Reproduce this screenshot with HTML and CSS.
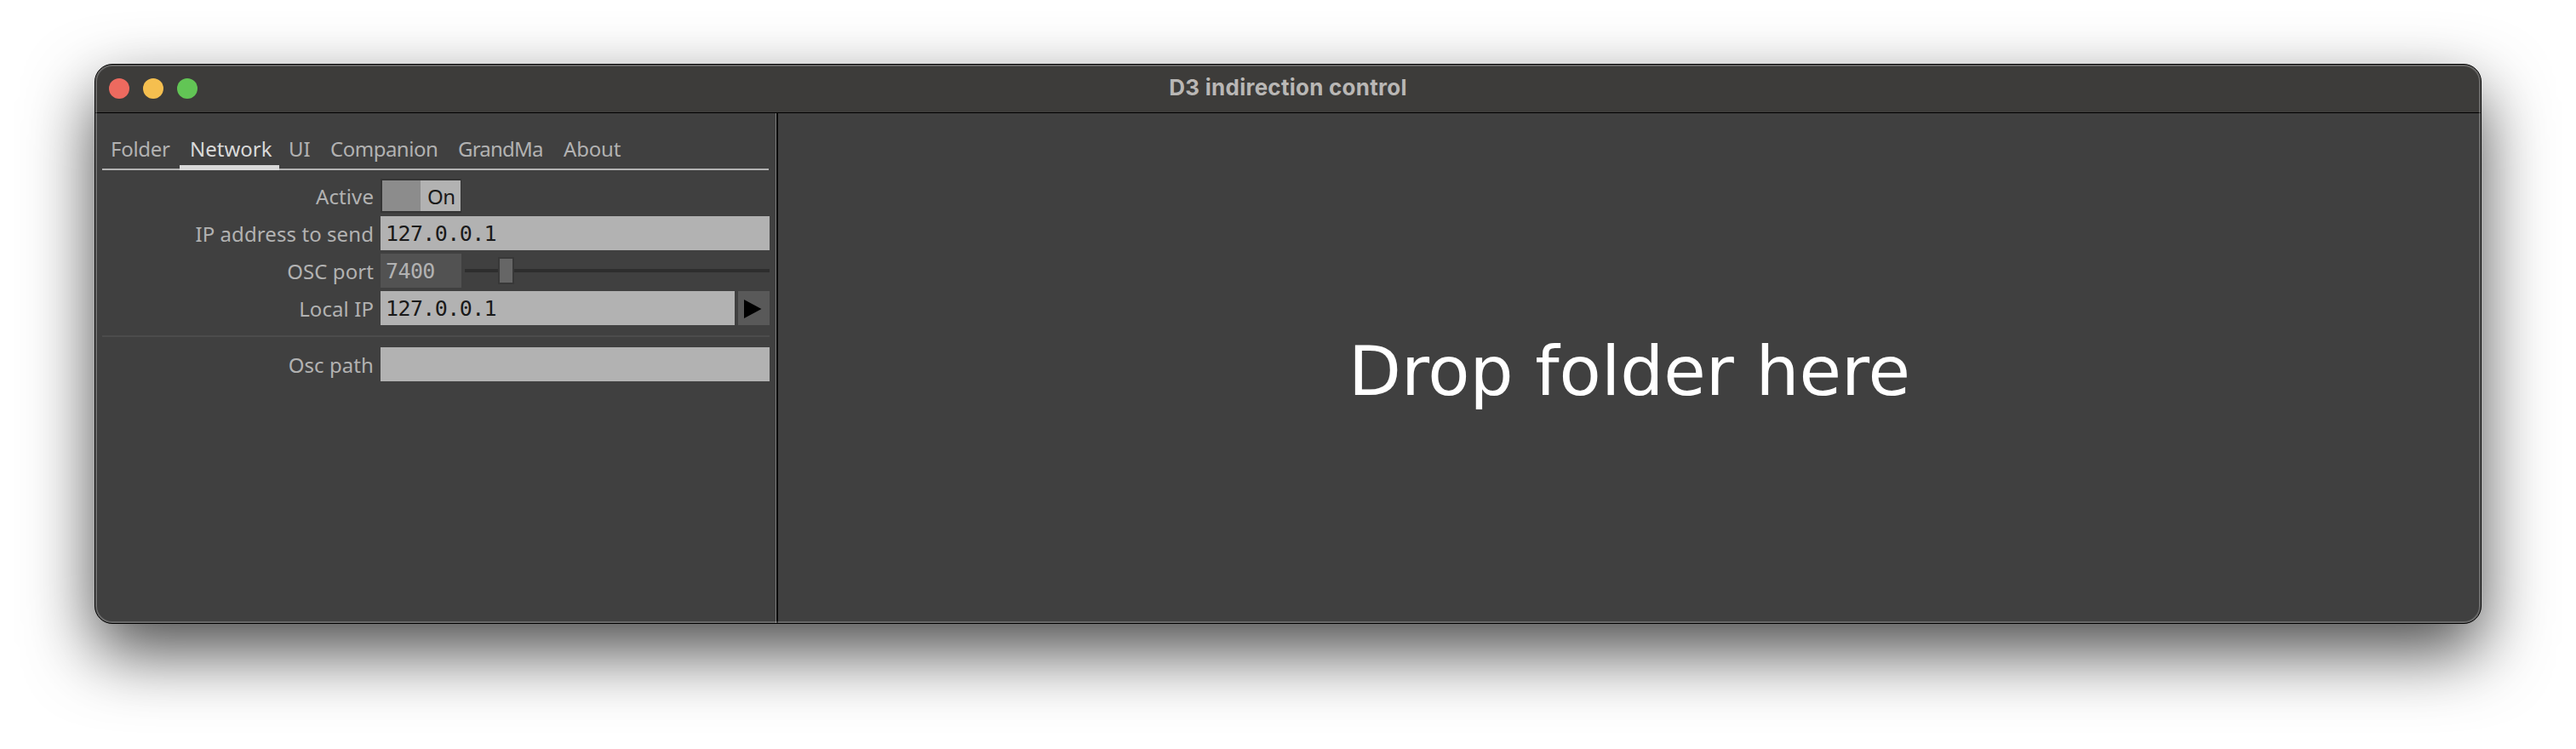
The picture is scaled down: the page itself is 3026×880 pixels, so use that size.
FILE: index.html
```html
<!DOCTYPE html>
<html lang="en">
<head>
<meta charset="utf-8">
<title>D3 indirection control</title>
<link rel="stylesheet" href="styles.css">
</head>
<body>
<main class="window">
  <header class="titlebar">
    <div class="lights"><span class="light red"></span><span class="light yellow"></span><span class="light green"></span></div>
    <h1 class="title">D3 indirection control</h1>
  </header>
  <div class="content">
    <section class="settings">
      <nav class="tabs">
        <a class="tab t-folder"><span>Folder</span></a>
        <a class="tab t-network active"><span>Network</span></a>
        <a class="tab t-ui"><span>UI</span></a>
        <a class="tab t-companion"><span>Companion</span></a>
        <a class="tab t-grandma"><span>GrandMa</span></a>
        <a class="tab t-about"><span>About</span></a>
      </nav>
      <div class="form">
        <div class="row"><span class="label">Active</span><div class="toggle"><span class="knob"></span><span class="state">On</span></div></div>
        <div class="row"><span class="label">IP address to send</span><div class="field">127.0.0.1</div></div>
        <div class="row"><span class="label">OSC port</span><div class="number">7400</div>
          <div class="slider"><span class="handle"></span></div></div>
        <div class="row"><span class="label">Local IP</span><div class="field">127.0.0.1</div>
          <div class="menu"><svg width="37" height="40" viewBox="0 0 37 40"><path d="M7 10v22L27.500 21z" fill="#000"/></svg></div></div>
      </div>
      <div class="separator"></div>
      <div class="row"><span class="label">Osc path</span><div class="field"></div></div>
    </section>
    <section class="drop"><p class="drop-text">Drop folder here</p></section>
  </div>
</main>
</body>
</html>
```
FILE: styles.css
```css
* { box-sizing: border-box; }
body {
  margin: 0;
  width: 3026px;
  height: 880px;
  padding: 75px 111px;
  background: #fff;
  overflow: hidden;
  font: 24px/40px "Noto Sans", sans-serif;
  color: #b2b2b2;
}
.window {
  position: relative;
  display: flex;
  flex-direction: column;
  width: 2804px;
  height: 658px;
  border: 1px solid #000;
  border-radius: 21px;
  background: #404040;
  overflow: hidden;
  box-shadow: 0 33px 80px rgba(0, 0, 0, .7);
}
.window::after {
  content: "";
  position: absolute;
  inset: 0;
  border: 2px solid rgba(255, 255, 255, .22);
  border-radius: 20px;
  pointer-events: none;
}
.titlebar {
  display: grid;
  grid-template-columns: 200px 1fr 200px;
  align-items: center;
  height: 57px;
  background: #3d3c3a;
  border-bottom: 1px solid #000;
}
.lights { display: flex; gap: 16px; padding-left: 16px; }
.light { width: 24px; height: 24px; border-radius: 50%; }
.red { background: #ed6a5f; }
.yellow { background: #f5bf4f; }
.green { background: #62c555; }
.title {
  margin: 0 0 2px;
  text-align: center;
  font: bold 26px/40px Inter, sans-serif;
  letter-spacing: .25px;
  color: #b9b7b5;
}
.content { display: flex; flex: 1; }
.settings {
  width: 802px;
  padding: 18px 9px 0 8px;
  border-right: 2px solid #000;
  box-shadow: inset -1px 0 #808080;
}
.tabs {
  display: flex;
  width: 783px;
  height: 49px;
  border-bottom: 2px solid #b2b2b2;
}
.tab { height: 49px; padding: 4px 0 0 12px; white-space: nowrap; }
.t-folder { width: 91px; padding-left: 10px; letter-spacing: -.3px; }
.t-network { width: 117px; }
.t-ui { width: 49px; padding-left: 11px; }
.t-companion { width: 150px; padding-left: 11px; letter-spacing: -.5px; }
.t-grandma { width: 123px; padding-left: 11px; letter-spacing: -.8px; }
.t-about { letter-spacing: -.2px; }
.active { color: #d9d9d9; border-bottom: 6px solid #d9d9d9; }
.form { display: flex; flex-direction: column; gap: 4px; padding-top: 10px; }
.row { display: flex; height: 40px; width: 784px; }
.label {
  width: 327px;
  padding-right: 8px;
  text-align: right;
  line-height: 41px;
  letter-spacing: .08px;
  white-space: nowrap;
}
.field {
  flex: 1;
  padding-left: 6px;
  background: #b2b2b2;
  color: #1a1a1a;
  font: 25px/42px "DejaVu Sans Mono", monospace;
  letter-spacing: -.6px;
}
.toggle {
  display: flex;
  width: 95px;
  border: 2px solid #353535;
  border-right-width: 1px;
  background: #b2b2b2;
  color: #1a1a1a;
}
.knob { width: 45px; background: #8c8c8c; }
.state { padding-left: 8px; line-height: 37px; letter-spacing: -.5px; }
.number {
  width: 95px;
  padding-left: 6px;
  background: #525252;
  font: 25px/42px "DejaVu Sans Mono", monospace;
  letter-spacing: -.6px;
}
.slider {
  display: flex;
  align-items: center;
  flex: 1;
  margin-left: 4px;
  padding-left: 39px;
  background: linear-gradient(#2e2e2e, #2e2e2e) 0 18px / 100% 4px no-repeat;
}
.handle { width: 19px; height: 32px; border: 2px solid #383838; background: #666; }
.menu { width: 37px; margin-left: 4px; background: #595959; }
.menu svg { display: block; }
.separator { width: 784px; height: 2px; margin: 12px 0; background: #4c4c4c; }
.drop { flex: 1; display: flex; justify-content: center; align-items: center; }
.drop-text { margin: 7px 0 0; color: #fff; font: 80.5px/96px "DejaVu Sans", sans-serif; }
```
